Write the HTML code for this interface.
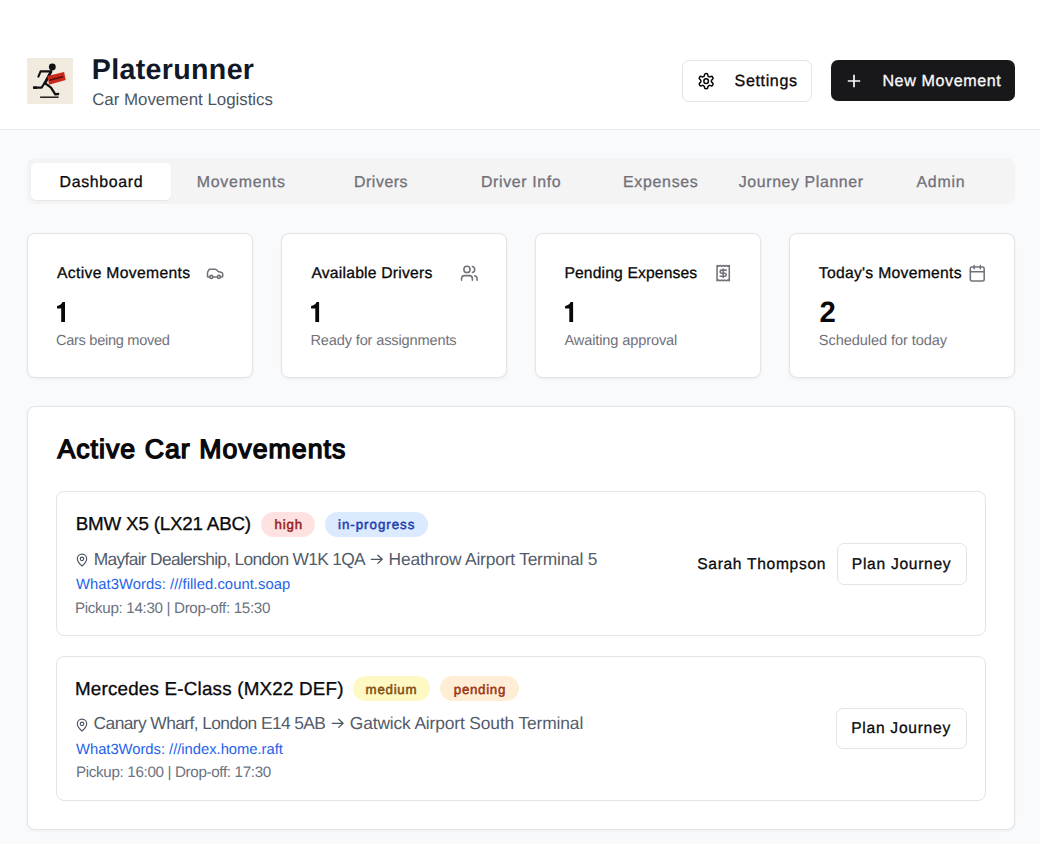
<!DOCTYPE html>
<html><head><meta charset="utf-8">
<style>
*{margin:0;padding:0;box-sizing:border-box}
html,body{width:1040px;height:844px;overflow:hidden}
body{background:#f9fafb;font-family:"Liberation Sans",sans-serif;color:#09090b;position:relative}
.a{position:absolute}
.t{position:absolute;line-height:1;white-space:nowrap;text-rendering:geometricPrecision}
.hdr{left:0;top:0;width:1040px;height:130px;background:#fff;border-bottom:1px solid #eaebee}
.btn{position:absolute;border:1px solid #e4e4e7;background:#fff;border-radius:7px}
.card{position:absolute;background:#fff;border:1px solid #e4e4e7;border-radius:8px;box-shadow:0 1px 3px rgba(0,0,0,.06)}
.item{position:absolute;background:#fff;border:1px solid #e4e4e7;border-radius:8px}
.badge{position:absolute;height:25px;border-radius:13px;font-size:13px;font-weight:bold;line-height:25px;text-align:center}
svg{position:absolute;overflow:visible}
</style></head>
<body>
<div class="a hdr"></div>
<!-- logo -->
<svg style="left:27px;top:58px" width="46" height="46" viewBox="0 0 46 46">
<rect width="46" height="46" fill="#f0eadf"/>
<g stroke="#111" stroke-linecap="round" stroke-linejoin="round" fill="none">
<path d="M11.4 18.6 L13.6 13.4 L24 13.4" stroke-width="2.1"/>
<path d="M24 13.6 L18 25" stroke-width="2.8"/>
<path d="M18.3 25.3 L24 29.6 L28.3 36.4 L31.2 36" stroke-width="2.3"/>
<path d="M17.6 25 L14.7 29.5 L7 29.6" stroke-width="2.3"/>
</g>
<path d="M6.2 28.4 H10 V31 H6.2 Z" fill="#111"/>
<path d="M13.1 39.2 L31.6 39.2" stroke="#111" stroke-width="1.4"/>
<circle cx="25.3" cy="9.0" r="3.4" fill="#111"/>
<path d="M20.4 18 L37.1 13.9 L38.7 22.1 L22.1 26.7 Z" fill="#c9281d"/>
<path d="M22.6 22.2 L36.2 18.6" stroke="#2a0805" stroke-width="1.7" stroke-dasharray="1.3 .5 .8 .4"/>
</svg>

<div class="btn" style="left:682px;top:60px;width:130px;height:42px"></div>
<svg style="left:696.75px;top:71.6px" width="18.3" height="18.3" viewBox="0 0 24 24" fill="none" stroke="#09090b" stroke-width="2" stroke-linecap="round" stroke-linejoin="round"><path d="M12.22 2h-.44a2 2 0 0 0-2 2v.18a2 2 0 0 1-1 1.73l-.43.25a2 2 0 0 1-2 0l-.15-.08a2 2 0 0 0-2.73.73l-.22.38a2 2 0 0 0 .73 2.73l.15.1a2 2 0 0 1 1 1.72v.51a2 2 0 0 1-1 1.74l-.15.09a2 2 0 0 0-.73 2.73l.22.38a2 2 0 0 0 2.73.73l.15-.08a2 2 0 0 1 2 0l.43.25a2 2 0 0 1 1 1.73V20a2 2 0 0 0 2 2h.44a2 2 0 0 0 2-2v-.18a2 2 0 0 1 1-1.73l.43-.25a2 2 0 0 1 2 0l.15.08a2 2 0 0 0 2.73-.73l.22-.39a2 2 0 0 0-.73-2.73l-.15-.08a2 2 0 0 1-1-1.74v-.5a2 2 0 0 1 1-1.74l.15-.09a2 2 0 0 0 .73-2.73l-.22-.38a2 2 0 0 0-2.73-.73l-.15.08a2 2 0 0 1-2 0l-.43-.25a2 2 0 0 1-1-1.73V4a2 2 0 0 0-2-2z"/><circle cx="12" cy="12" r="3"/></svg>

<div class="a" style="left:831px;top:60px;width:184px;height:41px;background:#18181b;border-radius:7px"></div>
<svg style="left:0;top:0" width="1" height="1"><path d="M847.8 81H860.2M854 74.8V87.2" stroke="#fafafa" stroke-width="1.7"/></svg>

<!-- tabs -->
<div class="a" style="left:27px;top:158px;width:988px;height:46px;background:#f4f4f5;border-radius:8px"></div>
<div class="a" style="left:31px;top:163px;width:140px;height:37px;background:#fff;border-radius:5px;box-shadow:0 1px 2px rgba(0,0,0,.06)"></div>

<!-- stat cards -->
<div class="card" style="left:27px;top:233px;width:226px;height:145px"></div>
<div class="card" style="left:281px;top:233px;width:226px;height:145px"></div>
<div class="card" style="left:535px;top:233px;width:226px;height:145px"></div>
<div class="card" style="left:789px;top:233px;width:226px;height:145px"></div>




<!-- icons -->
<svg style="left:205.9px;top:264.1px" width="18.2" height="18.2" viewBox="0 0 24 24" fill="none" stroke="#71717a" stroke-width="2" stroke-linecap="round" stroke-linejoin="round"><path d="M19 17h2c.6 0 1-.4 1-1v-3c0-.9-.7-1.7-1.5-1.9C18.7 10.6 16 10 16 10s-1.3-1.4-2.2-2.3c-.5-.4-1.1-.7-1.8-.7H5c-.6 0-1.1.4-1.4.9l-1.4 2.9A3.7 3.7 0 0 0 2 12v4c0 .6.4 1 1 1h2"/><circle cx="7" cy="17" r="2"/><path d="M9 17h6"/><circle cx="17" cy="17" r="2"/></svg>
<svg style="left:459.95px;top:263.9px" width="18.6" height="18.6" viewBox="0 0 24 24" fill="none" stroke="#71717a" stroke-width="2" stroke-linecap="round" stroke-linejoin="round"><path d="M16 21v-2a4 4 0 0 0-4-4H6a4 4 0 0 0-4 4v2"/><circle cx="9" cy="7" r="4"/><path d="M22 21v-2a4 4 0 0 0-3-3.87"/><path d="M16 3.13a4 4 0 0 1 0 7.75"/></svg>
<svg style="left:713.7px;top:264.1px" width="18.35" height="18.35" viewBox="0 0 24 24" fill="none" stroke="#71717a" stroke-width="2" stroke-linecap="round" stroke-linejoin="round"><path d="M4 2v20l2-1 2 1 2-1 2 1 2-1 2 1 2-1 2 1V2l-2 1-2-1-2 1-2-1-2 1-2-1-2 1Z"/><path d="M16 8h-6a2 2 0 1 0 0 4h4a2 2 0 1 1 0 4H8"/><path d="M12 17.5v-11"/></svg>
<svg style="left:967.8px;top:264.15px" width="18.5" height="18.5" viewBox="0 0 24 24" fill="none" stroke="#71717a" stroke-width="2" stroke-linecap="round" stroke-linejoin="round"><rect x="3" y="4" width="18" height="18" rx="2"/><path d="M16 2v4M8 2v4M3 10h18"/></svg>

<!-- active movements card -->
<div class="card" style="left:27px;top:406px;width:988px;height:424px"></div>

<div class="item" style="left:56px;top:491px;width:930px;height:145px"></div>
<div class="badge" style="left:261px;top:512px;width:54px;background:#fee2e2;color:#991b1b"></div>
<div class="badge" style="left:325px;top:512px;width:103px;background:#dbeafe;color:#1e40af"></div>
<svg style="left:75px;top:553px" width="14" height="14" viewBox="0 0 24 24" fill="none" stroke="#4b5563" stroke-width="2" stroke-linecap="round" stroke-linejoin="round"><path d="M20 10c0 4.993-5.539 10.193-7.399 11.799a1 1 0 0 1-1.202 0C9.539 20.193 4 14.993 4 10a8 8 0 0 1 16 0"/><circle cx="12" cy="10" r="3"/></svg>
<div class="btn" style="left:837px;top:543px;width:130px;height:42px"></div>

<div class="item" style="left:56px;top:656px;width:930px;height:145px"></div>
<div class="badge" style="left:353px;top:676px;width:77px;background:#fef9c3;color:#854d0e"></div>
<div class="badge" style="left:440px;top:676px;width:79px;background:#ffedd5;color:#9a3412"></div>
<svg style="left:75px;top:717.6px" width="14" height="14" viewBox="0 0 24 24" fill="none" stroke="#4b5563" stroke-width="2" stroke-linecap="round" stroke-linejoin="round"><path d="M20 10c0 4.993-5.539 10.193-7.399 11.799a1 1 0 0 1-1.202 0C9.539 20.193 4 14.993 4 10a8 8 0 0 1 16 0"/><circle cx="12" cy="10" r="3"/></svg>
<div class="btn" style="left:836px;top:708px;width:131px;height:41px"></div>
<svg style="left:0;top:0" width="1" height="1" fill="none" stroke="#4b5563" stroke-width="1.3" stroke-linecap="round" stroke-linejoin="round"><path d="M371.3 559.3H382.2M377.9 555.2L382.2 559.3L377.9 563.4"/><path d="M332.2 723.3H343.1M338.8 719.2L343.1 723.3L338.8 727.4"/></svg>
<svg style="left:0;top:0" width="1" height="1" fill="#09090b"><path transform="translate(0 0)" d="M62.5 302.1H65V321.9H61.2V308.6H57V305.9C59.4 305.9 61.3 304.6 62.5 302.1Z"/><path transform="translate(254.1 0)" d="M62.5 302.1H65V321.9H61.2V308.6H57V305.9C59.4 305.9 61.3 304.6 62.5 302.1Z"/><path transform="translate(508.1 0)" d="M62.5 302.1H65V321.9H61.2V308.6H57V305.9C59.4 305.9 61.3 304.6 62.5 302.1Z"/></svg>
<div class="t" id="t0" style="left:91.80px;top:55.70px;font-size:28.6px;font-weight:bold;color:#111827;letter-spacing:0.330px">Platerunner</div>
<div class="t" id="t1" style="left:92.20px;top:91.84px;font-size:16.9px;font-weight:normal;color:#4b5563;letter-spacing:-0.019px">Car Movement Logistics</div>
<div class="t" id="t2" style="left:734.60px;top:72.92px;font-size:16.1px;font-weight:normal;color:#09090b;letter-spacing:0.614px;-webkit-text-stroke:0.3px #09090b">Settings</div>
<div class="t" id="t3" style="left:882.40px;top:72.92px;font-size:16.1px;font-weight:normal;color:#fafafa;letter-spacing:0.600px;-webkit-text-stroke:0.3px #fafafa">New Movement</div>
<div class="t" id="t4" style="left:59.60px;top:174.81px;font-size:15.9px;font-weight:normal;color:#09090b;letter-spacing:0.662px;-webkit-text-stroke:0.3px #09090b">Dashboard</div>
<div class="t" id="t5" style="left:196.80px;top:174.81px;font-size:15.9px;font-weight:normal;color:#71717a;letter-spacing:0.750px;-webkit-text-stroke:0.3px #71717a">Movements</div>
<div class="t" id="t6" style="left:354.00px;top:174.81px;font-size:15.9px;font-weight:normal;color:#71717a;letter-spacing:0.542px;-webkit-text-stroke:0.3px #71717a">Drivers</div>
<div class="t" id="t7" style="left:481.00px;top:174.81px;font-size:15.9px;font-weight:normal;color:#71717a;letter-spacing:0.625px;-webkit-text-stroke:0.3px #71717a">Driver Info</div>
<div class="t" id="t8" style="left:623.00px;top:174.81px;font-size:15.9px;font-weight:normal;color:#71717a;letter-spacing:0.714px;-webkit-text-stroke:0.3px #71717a">Expenses</div>
<div class="t" id="t9" style="left:738.80px;top:174.81px;font-size:15.9px;font-weight:normal;color:#71717a;letter-spacing:0.607px;-webkit-text-stroke:0.3px #71717a">Journey Planner</div>
<div class="t" id="t10" style="left:916.40px;top:174.81px;font-size:15.9px;font-weight:normal;color:#71717a;letter-spacing:0.800px;-webkit-text-stroke:0.3px #71717a">Admin</div>
<div class="t" id="t11" style="left:57.00px;top:266.08px;font-size:15.7px;font-weight:normal;color:#09090b;letter-spacing:0.327px;-webkit-text-stroke:0.3px #09090b">Active Movements</div>
<div class="t" id="t12" style="left:311.40px;top:266.08px;font-size:15.7px;font-weight:normal;color:#09090b;letter-spacing:0.219px;-webkit-text-stroke:0.3px #09090b">Available Drivers</div>
<div class="t" id="t13" style="left:564.40px;top:266.08px;font-size:15.7px;font-weight:normal;color:#09090b;letter-spacing:0.133px;-webkit-text-stroke:0.3px #09090b">Pending Expenses</div>
<div class="t" id="t14" style="left:818.80px;top:266.08px;font-size:15.7px;font-weight:normal;color:#09090b;letter-spacing:0.287px;-webkit-text-stroke:0.3px #09090b">Today's Movements</div>
<div class="t" id="t15" style="left:819.40px;top:297.90px;font-size:29.3px;font-weight:bold;color:#09090b;letter-spacing:-1.300px">2</div>
<div class="t" id="t16" style="left:56.00px;top:333.94px;font-size:14.6px;font-weight:normal;color:#71717a;letter-spacing:-0.300px">Cars being moved</div>
<div class="t" id="t17" style="left:310.40px;top:333.94px;font-size:14.6px;font-weight:normal;color:#71717a;letter-spacing:-0.150px">Ready for assignments</div>
<div class="t" id="t18" style="left:564.40px;top:333.94px;font-size:14.6px;font-weight:normal;color:#71717a;letter-spacing:-0.125px">Awaiting approval</div>
<div class="t" id="t19" style="left:818.80px;top:333.94px;font-size:14.6px;font-weight:normal;color:#71717a;letter-spacing:-0.089px">Scheduled for today</div>
<div class="t" id="t20" style="left:57.40px;top:435.85px;font-size:26.7px;font-weight:normal;color:#09090b;letter-spacing:1.026px;-webkit-text-stroke:1.4px #09090b">Active Car Movements</div>
<div class="t" id="t21" style="left:75.80px;top:515.46px;font-size:18.8px;font-weight:normal;color:#09090b;letter-spacing:-0.200px;-webkit-text-stroke:0.3px #09090b">BMW X5 (LX21 ABC)</div>
<div class="t" id="t22" style="left:93.80px;top:550.84px;font-size:17.4px;font-weight:normal;color:#535c6a;letter-spacing:-0.694px">Mayfair Dealership, London W1K 1QA</div>
<div class="t" id="t23" style="left:388.60px;top:550.84px;font-size:17.4px;font-weight:normal;color:#535c6a;letter-spacing:-0.204px">Heathrow Airport Terminal 5</div>
<div class="t" id="t24" style="left:76.00px;top:578.10px;font-size:14.8px;font-weight:normal;color:#2563eb;letter-spacing:0.048px">What3Words: ///filled.count.soap</div>
<div class="t" id="t25" style="left:75.00px;top:600.73px;font-size:15.2px;font-weight:normal;color:#6b7280;letter-spacing:-0.337px">Pickup: 14:30 | Drop-off: 15:30</div>
<div class="t" id="t26" style="left:697.20px;top:556.85px;font-size:15.6px;font-weight:normal;color:#09090b;letter-spacing:0.685px;-webkit-text-stroke:0.3px #09090b">Sarah Thompson</div>
<div class="t" id="t27" style="left:851.80px;top:556.85px;font-size:15.6px;font-weight:normal;color:#09090b;letter-spacing:0.709px;-webkit-text-stroke:0.3px #09090b">Plan Journey</div>
<div class="t" id="t28" style="left:274.60px;top:518.09px;font-size:13.3px;font-weight:normal;color:#991b1b;letter-spacing:0.800px;-webkit-text-stroke:0.5px #991b1b">high</div>
<div class="t" id="t29" style="left:338.00px;top:518.09px;font-size:13.3px;font-weight:normal;color:#1e40af;letter-spacing:0.980px;-webkit-text-stroke:0.5px #1e40af">in-progress</div>
<div class="t" id="t30" style="left:75.00px;top:679.96px;font-size:18.8px;font-weight:normal;color:#09090b;letter-spacing:0.208px;-webkit-text-stroke:0.3px #09090b">Mercedes E-Class (MX22 DEF)</div>
<div class="t" id="t31" style="left:93.60px;top:715.34px;font-size:17.4px;font-weight:normal;color:#535c6a;letter-spacing:-0.596px">Canary Wharf, London E14 5AB</div>
<div class="t" id="t32" style="left:349.80px;top:715.34px;font-size:17.4px;font-weight:normal;color:#535c6a;letter-spacing:-0.138px">Gatwick Airport South Terminal</div>
<div class="t" id="t33" style="left:76.00px;top:742.60px;font-size:14.8px;font-weight:normal;color:#2563eb;letter-spacing:-0.031px">What3Words: ///index.home.raft</div>
<div class="t" id="t34" style="left:76.00px;top:765.23px;font-size:15.2px;font-weight:normal;color:#6b7280;letter-spacing:-0.340px">Pickup: 16:00 | Drop-off: 17:30</div>
<div class="t" id="t35" style="left:851.20px;top:721.45px;font-size:15.6px;font-weight:normal;color:#09090b;letter-spacing:0.727px;-webkit-text-stroke:0.3px #09090b">Plan Journey</div>
<div class="t" id="t36" style="left:365.60px;top:682.59px;font-size:13.3px;font-weight:normal;color:#854d0e;letter-spacing:0.740px;-webkit-text-stroke:0.5px #854d0e">medium</div>
<div class="t" id="t37" style="left:453.80px;top:682.59px;font-size:13.3px;font-weight:normal;color:#9a3412;letter-spacing:0.700px;-webkit-text-stroke:0.5px #9a3412">pending</div>
</body></html>
